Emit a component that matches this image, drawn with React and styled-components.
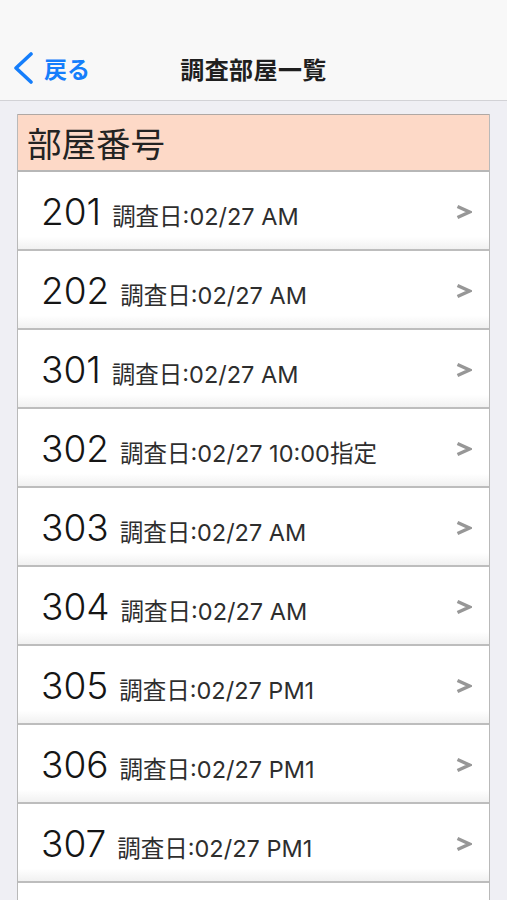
import React from "react";
import styled, { createGlobalStyle } from "styled-components";

const GlobalStyle = createGlobalStyle`
  html, body {
    margin: 0;
    padding: 0;
    background: #efeff4;
  }
  body {
    font-family: "Inter", "Noto Sans CJK JP", sans-serif;
    -webkit-font-smoothing: antialiased;
  }
`;

const Page = styled.div`
  min-height: 100vh;
  background: #efeff4;
  overflow: hidden;
`;

const NavBar = styled.header`
  height: 101px;
  box-sizing: border-box;
  padding-top: 36px;
  background: #f8f8f8;
  border-bottom: 1.5px solid #d2d2d6;
  display: grid;
  grid-template-columns: 1fr auto 1fr;
  align-items: center;
`;

const BackButton = styled.button`
  justify-self: start;
  display: flex;
  align-items: center;
  gap: 9px;
  margin: 0;
  padding: 0 0 0 13px;
  border: none;
  background: transparent;
  color: #157efb;
  font-family: "Noto Sans CJK JP", sans-serif;
  font-weight: 700;
  font-size: 23px;
  line-height: 1;
  cursor: pointer;
`;

const Title = styled.h1`
  margin: 0;
  font-family: "Noto Sans CJK JP", sans-serif;
  font-weight: 700;
  font-size: 24px;
  color: #1f1f1f;
  letter-spacing: 0.4px;
`;

const List = styled.div`
  margin: 13px 17px 0 17px;
  border-left: 1.5px solid #b9b9b9;
  border-right: 1.5px solid #b9b9b9;
  background: #ffffff;
`;

const Header = styled.div`
  height: 58px;
  box-sizing: border-box;
  display: flex;
  align-items: center;
  padding-left: 9px;
  background: #fdd9c7;
  border-top: 1.5px solid #b0a8a4;
  border-bottom: 2px solid #b7b7b7;
  font-family: "Noto Sans CJK JP", sans-serif;
  font-size: 34.5px;
  color: #232323;
  line-height: 1;
`;

const Row = styled.div`
  height: 79px;
  box-sizing: border-box;
  display: flex;
  align-items: center;
  justify-content: space-between;
  padding: 1px 17px 0 23px;
  border-bottom: 2px solid #bdbdbd;
  background: linear-gradient(to bottom, #ffffff 0%, #ffffff 84%, #f1f1f1 100%);
`;

const RowText = styled.div`
  display: flex;
  align-items: baseline;
  color: #1d1d1d;
`;

const RoomNumber = styled.span`
  font-family: "Inter", sans-serif;
  font-size: 37px;
  font-weight: 300;
  color: #151515;
`;

const SurveyDate = styled.span`
  margin-left: 11px;
  font-family: "Inter", "Noto Sans CJK JP", sans-serif;
  font-size: 23.5px;
  font-weight: 400;
  color: #2e2e2e;
`;

const Chevron = styled.svg`
  width: 17px;
  height: 16px;
  flex: none;
  margin-top: 2px;
`;

const BackIcon = () => (
  <svg width="22" height="32" viewBox="0 0 22 32">
    <polyline
      points="18,2 3,16 18,30"
      fill="none"
      stroke="#157efb"
      strokeWidth="3.6"
      strokeLinecap="round"
      strokeLinejoin="round"
    />
  </svg>
);

const rooms = [
  { no: "201", date: "調査日:02/27 AM" },
  { no: "202", date: "調査日:02/27 AM" },
  { no: "301", date: "調査日:02/27 AM" },
  { no: "302", date: "調査日:02/27 10:00指定" },
  { no: "303", date: "調査日:02/27 AM" },
  { no: "304", date: "調査日:02/27 AM" },
  { no: "305", date: "調査日:02/27 PM1" },
  { no: "306", date: "調査日:02/27 PM1" },
  { no: "307", date: "調査日:02/27 PM1" },
  { no: "308", date: "調査日:02/27 PM1" },
];

export default function App() {
  return (
    <Page>
      <GlobalStyle />
      <NavBar>
        <BackButton>
          <BackIcon />
          戻る
        </BackButton>
        <Title>調査部屋一覧</Title>
        <span />
      </NavBar>
      <List>
        <Header>部屋番号</Header>
        {rooms.map((r) => (
          <Row key={r.no}>
            <RowText>
              <RoomNumber>{r.no}</RoomNumber>
              <SurveyDate>{r.date}</SurveyDate>
            </RowText>
            <Chevron viewBox="0 0 17 16">
              <polyline
                points="2.5,2.5 14.5,8 2.5,13.5"
                fill="none"
                stroke="#979797"
                strokeWidth="3.4"
                strokeLinejoin="miter"
              />
            </Chevron>
          </Row>
        ))}
      </List>
    </Page>
  );
}
